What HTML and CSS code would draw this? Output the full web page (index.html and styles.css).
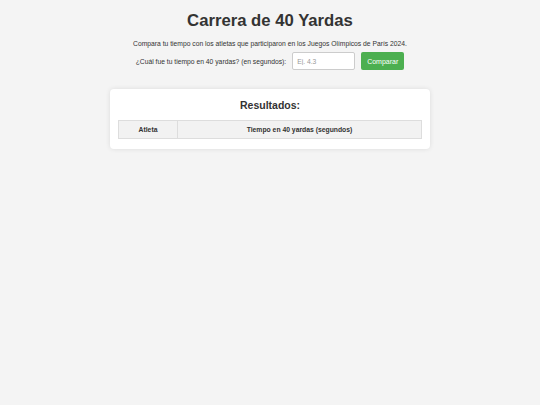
FILE: index.html
```html
<!DOCTYPE html>
<html lang="es">
<head>
  <meta charset="UTF-8">
  <meta name="viewport" content="width=device-width, initial-scale=1.0">
  <title>Carrera de 40 Yardas</title>
  <link rel="stylesheet" href="styles.css">
</head>
<body>

  <div class="container">
    <h1>Carrera de 40 Yardas</h1>
    <p class="intro">Compara tu tiempo con los atletas que participaron en los Juegos Olímpicos de París 2024.</p>

    <!-- Formulario de tiempo -->
    <form class="time-form" onsubmit="return false;">
      <label for="userTime">¿Cuál fue tu tiempo en 40 yardas? (en segundos):</label>
      <input type="number" id="userTime" step="0.01" placeholder="Ej. 4.3">
      <button type="submit">Comparar</button>
    </form>

    <!-- Resultados -->
    <div class="results">
      <h2>Resultados:</h2>
      <table>
        <thead>
          <tr>
            <th class="col-athlete">Atleta</th>
            <th>Tiempo en 40 yardas (segundos)</th>
          </tr>
        </thead>
        <tbody id="resultsBody"></tbody>
      </table>
    </div>
  </div>

</body>
</html>
```

FILE: styles.css
```css
body {
  font-family: "Liberation Sans", Arial, sans-serif;
  background-color: #f4f4f4;
  color: #333;
  margin: 0;
  padding: 11px 0;
}
.container {
  width: 320px;
  margin: 0 auto;
  text-align: center;
}
h1 {
  font-size: 16.7px;
  margin: 0 0 9px;
  white-space: nowrap;
}
.intro {
  font-size: 6.75px;
  margin: 0 0 5px;
  white-space: nowrap;
}
.time-form {
  display: flex;
  justify-content: center;
  align-items: center;
  gap: 6px;
  font-size: 6.75px;
  white-space: nowrap;
}
.time-form input {
  width: 63px;
  height: 18px;
  box-sizing: border-box;
  padding: 0 4px;
  border: 1px solid #ccc;
  border-radius: 2px;
  font-family: inherit;
  font-size: 6.75px;
  color: #333;
  background: #fff;
}
.time-form input::placeholder {
  color: #999;
}
.time-form button {
  height: 18px;
  padding: 0 6px;
  border: none;
  border-radius: 2px;
  background-color: #4caf50;
  color: #fff;
  font-family: inherit;
  font-size: 7px;
  cursor: pointer;
}
.results {
  background-color: #fff;
  margin-top: 19px;
  padding: 10px 8px 10px;
  border-radius: 4px;
  box-shadow: 0 0 5px rgba(0, 0, 0, 0.1);
}
h2 {
  font-size: 10.5px;
  margin: 0 0 9px;
}
table {
  width: 100%;
  border-collapse: collapse;
  font-size: 6.8px;
}
th {
  background-color: #f2f2f2;
  border: 1px solid #ddd;
  height: 17px;
  padding: 0 5px;
}
.col-athlete {
  width: 48px;
}
```
